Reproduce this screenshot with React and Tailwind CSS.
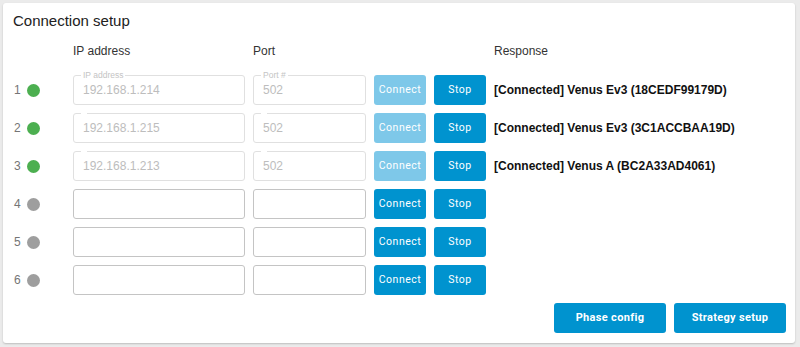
import React from 'react';

const rows = [
  { n: 1, ip: '192.168.1.214', port: '502', on: true, label: true, resp: '[Connected] Venus Ev3 (18CEDF99179D)' },
  { n: 2, ip: '192.168.1.215', port: '502', on: true, resp: '[Connected] Venus Ev3 (3C1ACCBAA19D)' },
  { n: 3, ip: '192.168.1.213', port: '502', on: true, resp: '[Connected] Venus A (BC2A33AD4061)' },
  { n: 4, ip: '', port: '', on: false },
  { n: 5, ip: '', port: '', on: false },
  { n: 6, ip: '', port: '', on: false },
];

const Field = ({ value, on, label, width }) => (
  <div
    className={`relative h-[30px] ${width} rounded-[3px] border flex items-center pl-[9px] text-[12px] ${
      on ? 'border-[#e0e0e0] text-[#bdbdbd]' : 'border-[#c4c4c4] text-[#333]'
    }`}
  >
    {on && (
      <span className="absolute -top-[6px] left-[7px] bg-white px-[2px] text-[8.5px] leading-[10px] text-[#c4c4c4]">
        {label || '\u00a0'}
      </span>
    )}
    {value}
  </div>
);

export default function App() {
  return (
    <div className="w-full h-[347px] bg-[#ebebeb] pt-[3px] pl-[3px] pr-[5px] pb-[4px]" style={{ fontFamily: '"Liberation Sans", Arial, sans-serif' }}>
      <div className="h-full bg-white rounded-[3px] shadow-[0_1px_2px_rgba(0,0,0,0.2)] flex flex-col">
        <h1 className="pt-[8px] pl-[10px] h-[28px] text-[15px] leading-[20px] text-[#212121]">Connection setup</h1>

        <div className="mt-[12px] flex items-center h-[16px] text-[12px] text-[#333]">
          <span className="ml-[70px] w-[180px]">IP address</span>
          <span className="w-[241px]">Port</span>
          <span>Response</span>
        </div>

        <div className="mt-[16px] flex flex-col gap-[8px]">
          {rows.map((r) => (
            <div key={r.n} className="flex items-center h-[30px] pl-[11px]">
              <span className="w-[13px] text-[12px] text-[#757575]">{r.n}</span>
              <span className={`w-[13px] h-[13px] rounded-full ${r.on ? 'bg-[#4caf50]' : 'bg-[#9e9e9e]'}`} />
              <div className="ml-[33px] flex items-center gap-[8px]">
                <Field value={r.ip} on={r.on} label={r.label ? 'IP address' : null} width="w-[172px]" />
                <Field value={r.port} on={r.on} label={r.label ? 'Port #' : null} width="w-[113px]" />
                <button
                  className={`h-[30px] w-[52px] rounded-[3px] text-[10.5px] font-normal tracking-[0.05em] text-white ${
                    r.on ? 'bg-[#7ec8e9]' : 'bg-[#0093cf]'
                  }`}
                  style={{ fontFamily: 'Roboto, sans-serif' }}
                >
                  Connect
                </button>
                <button
                  className="h-[30px] w-[52px] rounded-[3px] bg-[#0093cf] text-[10.5px] font-normal tracking-[0.05em] text-white"
                  style={{ fontFamily: 'Roboto, sans-serif' }}
                >
                  Stop
                </button>
                {r.resp && <span className="text-[12px] font-bold text-[#111]">{r.resp}</span>}
              </div>
            </div>
          ))}
        </div>

        <div className="mt-[8px] flex justify-end gap-[8px] pr-[9px]">
          <button
            className="h-[30px] w-[112px] rounded-[3px] bg-[#0093cf] text-[11px] font-bold tracking-[0.03em] text-white"
            style={{ fontFamily: 'Roboto, sans-serif' }}
          >
            Phase config
          </button>
          <button
            className="h-[30px] w-[112px] rounded-[3px] bg-[#0093cf] text-[11px] font-bold tracking-[0.03em] text-white"
            style={{ fontFamily: 'Roboto, sans-serif' }}
          >
            Strategy setup
          </button>
        </div>
      </div>
    </div>
  );
}
